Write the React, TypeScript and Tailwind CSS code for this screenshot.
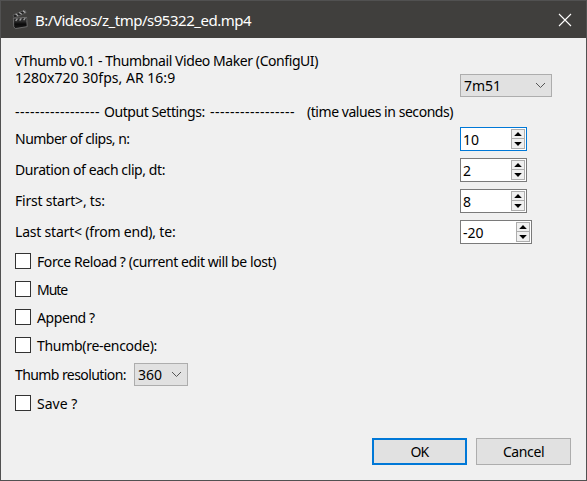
import React from "react";

const ink = "whitespace-pre leading-[17px]";

function ClapperIcon() {
  return (
    <svg width="18" height="21" viewBox="0 0 18 21" className="block">
      <defs>
        <linearGradient id="board" x1="0" y1="0" x2="0" y2="1">
          <stop offset="0" stopColor="#6b6b6b" />
          <stop offset="0.3" stopColor="#333" />
          <stop offset="0.6" stopColor="#0a0a0a" />
          <stop offset="1" stopColor="#1c1c1c" />
        </linearGradient>
      </defs>
      <path d="M2 6L14 1L15.2 3.6L3.2 9Z" fill="#222" stroke="#686868" strokeWidth="0.7" />
      <path d="M4.6 5L7.2 6.8M8.2 3.5L10.8 5.2M12 1.9L14.4 3.6" stroke="#a9a9a9" strokeWidth="1.3" />
      <path d="M2.4 9.4L15.6 8.4L16.2 17.6L4.4 19.6L2.8 17.8Z" fill="url(#board)" stroke="#777" strokeWidth="0.8" />
      <path d="M2.8 9.8L15.4 8.9L15.5 11.4L3 12.2Z" fill="#2b2b2b" />
      <path d="M4.7 11.8L6.4 9.6M8.6 11.5L10.4 9.3M12.6 11.2L14.3 9.1" stroke="#a0a0a0" strokeWidth="1.3" />
    </svg>
  );
}

function Combo({ value, className }: { value: string; className: string }) {
  return (
    <div className={`flex h-[23px] items-center justify-between border border-[#adadad] bg-[#e1e1e1] pl-[3px] pr-[5px] ${className}`}>
      <span className={ink}>{value}</span>
      <svg width="11" height="7" viewBox="0 0 11 7">
        <path d="M1 1L5.5 5.5L10 1" fill="none" stroke="#555" strokeWidth="1" />
      </svg>
    </div>
  );
}

function Spin({ value, className }: { value: string; className: string }) {
  return (
    <div className={`flex h-6 justify-between border bg-white pl-[2px] pr-px pt-px ${className}`}>
      <span className={`${ink} pt-[2px]`}>{value}</span>
      <div className="flex h-5 w-[14px] flex-col border border-[#adadad] bg-[#f0f0f0]">
        <div className="flex h-[9px] items-center justify-center border-b border-[#adadad]">
          <svg width="8" height="4" viewBox="0 0 8 4"><path d="M0.2 4L4 0L7.8 4Z" /></svg>
        </div>
        <div className="flex h-[9px] items-center justify-center">
          <svg width="8" height="4" viewBox="0 0 8 4"><path d="M0.2 0L4 4L7.8 0Z" /></svg>
        </div>
      </div>
    </div>
  );
}

function Field({ label, text, children }: { label: string; text: string; children: React.ReactNode }) {
  return (
    <div className="flex h-6">
      <div className={`w-[445px] pt-[3px] ${ink} ${text}`}>{label}</div>
      {children}
    </div>
  );
}

function Check({ label, text }: { label: string; text: string }) {
  return (
    <div className="flex h-4 items-center">
      <div className="size-4 shrink-0 border border-[#333] bg-white" />
      <span className={`ml-[6px] ${ink} ${text}`}>{label}</span>
    </div>
  );
}

export default function App() {
  return (
    <div className="flex h-[481px] w-[587px] flex-col border border-[#515151] bg-[#f0f0f0] font-['Noto_Sans',sans-serif] text-[14px] text-black">
      <div className="flex h-[37px] shrink-0 items-center bg-[#403f3d] pl-[10px] pr-[14px] text-white">
        <ClapperIcon />
        <span className="ml-[6px] mt-px whitespace-pre text-[15px] leading-[20px] tracking-[-0.48px]">B:/Videos/z_tmp/s95322_ed.mp4</span>
        <svg className="ml-auto" width="14" height="14" viewBox="0 0 14 14">
          <path d="M1 1L13 13M13 1L1 13" stroke="#fff" strokeWidth="1.1" />
        </svg>
      </div>
      <div className="flex flex-1 flex-col pl-[14px] pr-[15px]">
        <div className="flex h-[63px] pt-[14px]">
          <div className="w-[445px]">
            <div className={`${ink} tracking-[-0.43px]`}>vThumb v0.1 - Thumbnail Video Maker (ConfigUI)</div>
            <div className={`${ink} tracking-[0.02px]`}>1280x720 30fps, AR 16:9</div>
          </div>
          <Combo value="7m51" className="mt-[22px] w-[92px]" />
        </div>
        <div className="flex h-[25px] pt-[2px]">
          <div className={`${ink} w-[89px] tracking-[0.49px]`}>-----------------</div>
          <div className={`${ink} w-[106px] tracking-[-0.43px]`}>Output Settings:</div>
          <div className={`${ink} w-[97px] tracking-[0.49px]`}>-----------------</div>
          <div className={`${ink} tracking-[-0.45px]`}>(time values in seconds)</div>
        </div>
        <div className="mt-px flex flex-col gap-[7px]">
          <Field label="Number of clips, n:" text="tracking-[-0.51px]"><Spin value="10" className="w-[67px] border-[#0078d7]" /></Field>
          <Field label="Duration of each clip, dt:" text="tracking-[-0.41px]"><Spin value="2" className="w-[67px] border-[#7a7a7a]" /></Field>
          <Field label="First start>, ts:" text="tracking-[-0.22px]"><Spin value="8" className="w-[67px] border-[#7a7a7a]" /></Field>
          <Field label="Last start< (from end), te:" text="tracking-[-0.2px]"><Spin value="-20" className="w-[72px] border-[#7a7a7a]" /></Field>
        </div>
        <div className="mt-[9px] flex flex-col gap-3">
          <Check label="Force Reload ? (current edit will be lost)" text="tracking-[-0.42px]" />
          <Check label="Mute" text="tracking-[-1.05px]" />
          <Check label="Append ?" text="tracking-[-0.42px]" />
          <Check label="Thumb(re-encode):" text="tracking-[-0.3px]" />
        </div>
        <div className="mt-[10px] flex h-[23px] items-center">
          <span className={`${ink} w-[119px] tracking-[-0.58px]`}>Thumb resolution:</span>
          <Combo value="360" className="w-[54px]" />
        </div>
        <div className="mt-[9px]"><Check label="Save ?" text="tracking-[0px]" /></div>
        <div className="mt-[27px] flex justify-end gap-[9px]">
          <button className="h-[27px] w-[95px] border-2 border-[#0078d7] bg-[#e1e1e1] leading-[23px] tracking-[-0.7px]">OK</button>
          <button className="h-[27px] w-[95px] border border-[#adadad] bg-[#e1e1e1] leading-[25px] tracking-[-0.4px]">Cancel</button>
        </div>
      </div>
    </div>
  );
}
